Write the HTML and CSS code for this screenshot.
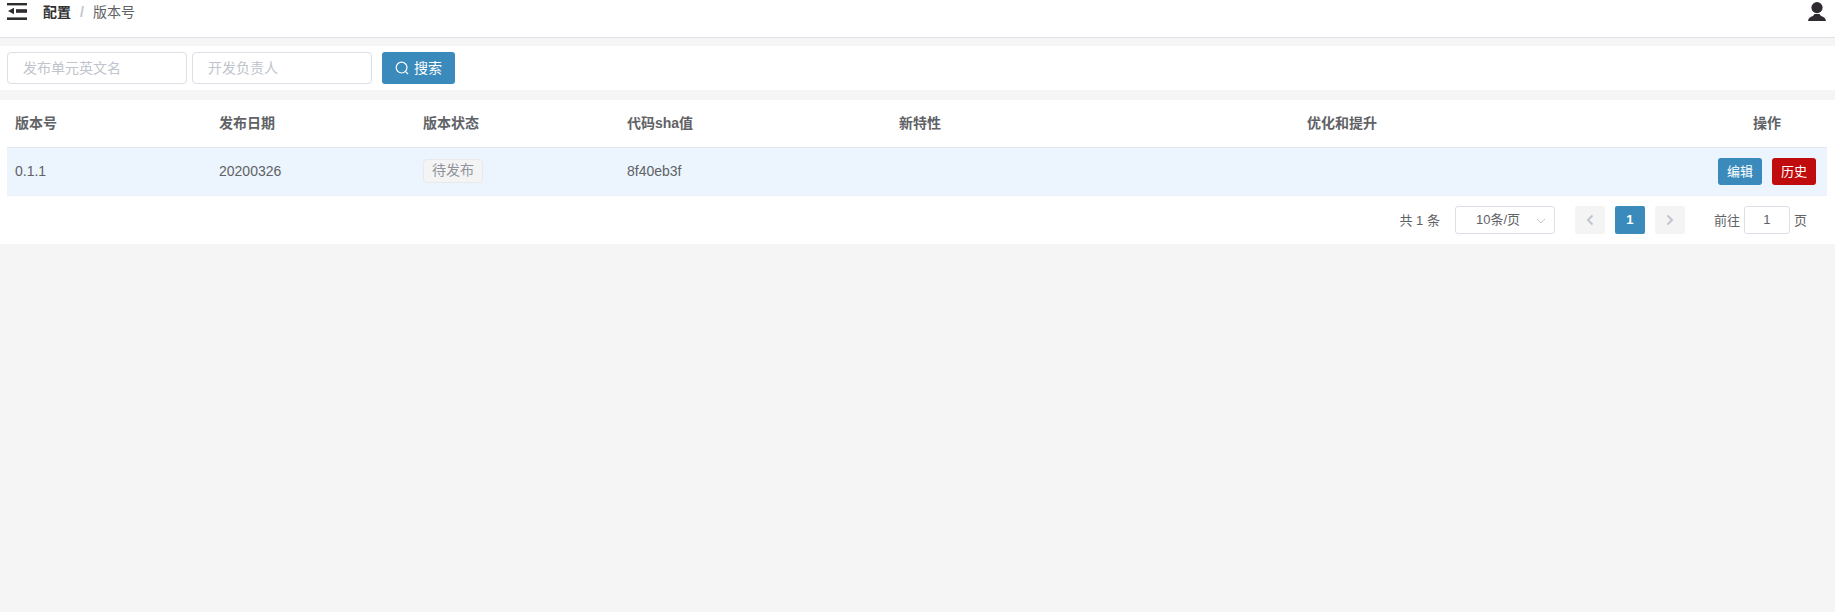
FILE: index.html
```html
<!DOCTYPE html>
<html lang="zh-CN">
<head>
<meta charset="utf-8">
<title>版本号</title>
<link rel="stylesheet" href="styles.css">
</head>
<body>
<header class="topbar">
  <svg class="menu-icon" width="20" height="17" viewBox="0 0 20 17" aria-hidden="true">
    <rect x="0" y="0" width="20" height="2.4" fill="#2f2b30"/>
    <rect x="9" y="6.2" width="11" height="3.6" fill="#2f2b30"/>
    <rect x="0" y="14.4" width="20" height="2.6" fill="#2f2b30"/>
    <path d="M1 8 L7 4.8 V11.2 Z" fill="#2f2b30"/>
  </svg>
  <nav class="crumbs">
    <span class="crumb-strong">配置</span><span class="crumb-sep">/</span><span class="crumb-current">版本号</span>
  </nav>
  <svg class="user-icon" width="18" height="19" viewBox="0 0 18 19" aria-hidden="true">
    <circle cx="9" cy="5.6" r="5.6" fill="#2f2b30"/>
    <path d="M0 19 C0.5 16 2 15 5 14 L6.5 12 H11.5 L13 14 C16 15 17.5 16 18 19 Z" fill="#2f2b30"/>
  </svg>
</header>

<section class="filters">
  <input class="field" type="text" placeholder="发布单元英文名">
  <input class="field" type="text" placeholder="开发负责人">
  <button class="search-btn" type="button">
    <svg width="14" height="14" viewBox="0 0 14 14" aria-hidden="true">
      <circle cx="6.6" cy="6.6" r="5.4" fill="none" stroke="#fff" stroke-width="1.2"/>
      <path d="M10.6 10.6 L13 13" stroke="#fff" stroke-width="1.2" fill="none"/>
    </svg>
    <span class="btn-label">搜索</span>
  </button>
</section>

<main class="panel">
  <table class="grid">
    <colgroup>
      <col class="c-3"><col class="c-3"><col class="c-3"><col class="c-4"><col class="c-6"><col class="c-6"><col class="c-op">
    </colgroup>
    <thead>
      <tr>
        <th>版本号</th><th>发布日期</th><th>版本状态</th><th>代码sha值</th><th>新特性</th><th>优化和提升</th><th class="center">操作</th>
      </tr>
    </thead>
    <tbody>
      <tr>
        <td>0.1.1</td>
        <td>20200326</td>
        <td><span class="tag">待发布</span></td>
        <td>8f40eb3f</td>
        <td></td>
        <td></td>
        <td class="ops"><button class="mini primary" type="button">编辑</button><button class="mini danger" type="button">历史</button></td>
      </tr>
    </tbody>
  </table>
  <div class="pager">
    <span class="total">共 1 条</span>
    <div class="size">
      <span>10条/页</span>
      <svg class="chev-down" width="10" height="6" viewBox="0 0 10 6" aria-hidden="true"><path d="M1 1 L5 5 L9 1" fill="none" stroke="#c0c4cc" stroke-width="1"/></svg>
    </div>
    <button class="page-btn prev" type="button" aria-label="上一页">
      <svg width="8" height="12" viewBox="0 0 8 12" aria-hidden="true"><path d="M6.5 1.5 L2 6 L6.5 10.5" fill="none" stroke="#c0c4cc" stroke-width="2"/></svg>
    </button>
    <button class="page-btn current" type="button">1</button>
    <button class="page-btn next" type="button" aria-label="下一页">
      <svg width="8" height="12" viewBox="0 0 8 12" aria-hidden="true"><path d="M1.5 1.5 L6 6 L1.5 10.5" fill="none" stroke="#c0c4cc" stroke-width="2"/></svg>
    </button>
    <span class="jump">前往</span>
    <input class="jump-input" type="text" value="1">
    <span class="jump-end">页</span>
  </div>
</main>
</body>
</html>
```

FILE: styles.css
```css
* { box-sizing: border-box; }
html, body { height: 100%; }
body {
  margin: 0;
  background: #f5f5f5;
  color: #606266;
  font-family: "Liberation Sans", "Noto Sans CJK SC", sans-serif;
  font-size: 14px;
}
button, input { font-family: inherit; }

.topbar {
  height: 38px;
  background: #fff;
  border-bottom: 1px solid #e0e0e8;
  display: flex;
  align-items: flex-start;
  padding: 3px 9px 0 7px;
}
.menu-icon { flex: none; }
.crumbs {
  margin-left: 16px;
  margin-top: -3px;
  line-height: 24px;
  flex: 1;
}
.crumb-strong { font-weight: 700; color: #303133; }
.crumb-sep { margin: 0 9px; color: #c0c4cc; font-weight: 700; }
.crumb-current { color: #606266; }
.user-icon { flex: none; margin-top: -1px; }

.filters {
  margin-top: 8px;
  height: 44px;
  background: #fff;
  display: flex;
  align-items: center;
  padding-left: 7px;
}
.field {
  width: 180px;
  height: 32px;
  margin-right: 5px;
  padding: 0 15px;
  border: 1px solid #dcdfe6;
  border-radius: 4px;
  background: #fff;
  font-size: 14px;
  color: #606266;
  outline: none;
}
.field::placeholder { color: #c0c4cc; opacity: 1; }
.search-btn {
  width: 73px;
  height: 32px;
  margin-left: 5px;
  border: 0;
  border-radius: 3px;
  background: #3a8bbb;
  color: #fff;
  font-size: 14px;
  display: flex;
  align-items: center;
  justify-content: center;
  gap: 5px;
  padding: 0;
}
.btn-label { position: relative; top: -1px; }

.panel {
  margin-top: 10px;
  height: 144px;
  background: #fff;
  padding: 0 8px 0 7px;
}
.grid {
  width: 100%;
  border-collapse: collapse;
  table-layout: fixed;
}
.c-3 { width: 204px; }
.c-4 { width: 272px; }
.c-6 { width: 408px; }
.c-op { width: 120px; }
.grid th {
  height: 47px;
  padding: 0 8px 2px;
  text-align: left;
  font-weight: 700;
  font-size: 14px;
  color: #606266;
  border-bottom: 1px solid #e4e7ed;
}
.grid th.center { text-align: center; }
.grid td {
  height: 48px;
  padding: 0 8px;
  background: #ecf4fd;
  border-bottom: 1px solid #ebeef5;
  font-size: 14px;
}
.tag {
  display: inline-block;
  width: 60px;
  height: 24px;
  line-height: 21px;
  text-align: center;
  background: #f4f4f5;
  border: 1px solid #e9e9eb;
  border-radius: 4px;
  color: #909399;
  vertical-align: middle;
}
.grid td.ops { padding: 0 11px 0 0; text-align: right; }
.mini {
  width: 44px;
  height: 27px;
  padding: 0 0 2px;
  border: 0;
  border-radius: 3px;
  color: #fff;
  font-size: 13px;
  vertical-align: middle;
}
.mini + .mini { margin-left: 10px; }
.primary { background: #3a8bbb; }
.danger { background: #c00c0c; }

.pager {
  display: flex;
  align-items: center;
  justify-content: flex-end;
  height: 28px;
  margin-top: 10px;
  padding-right: 20px;
  font-size: 13px;
}
.total { margin-right: 15px; }
.size {
  position: relative;
  width: 100px;
  height: 28px;
  line-height: 26px;
  border: 1px solid #dcdfe6;
  border-radius: 3px;
  padding-left: 20px;
  margin-right: 20px;
}
.chev-down { position: absolute; right: 8px; top: 11px; }
.page-btn {
  width: 30px;
  height: 28px;
  margin-right: 10px;
  padding: 0;
  border: 0;
  border-radius: 2px;
  background: #f4f4f5;
  color: #606266;
  display: flex;
  align-items: center;
  justify-content: center;
  font-size: 13px;
}
.page-btn.current { background: #3a8bbb; color: #fff; font-weight: 700; }
.page-btn.next { margin-right: 29px; }
.jump { margin-right: 4px; }
.jump-input {
  width: 46px;
  height: 28px;
  margin-right: 4px;
  border: 1px solid #dcdfe6;
  border-radius: 3px;
  text-align: center;
  font-size: 13px;
  color: #606266;
  outline: none;
  padding: 0;
}
```
